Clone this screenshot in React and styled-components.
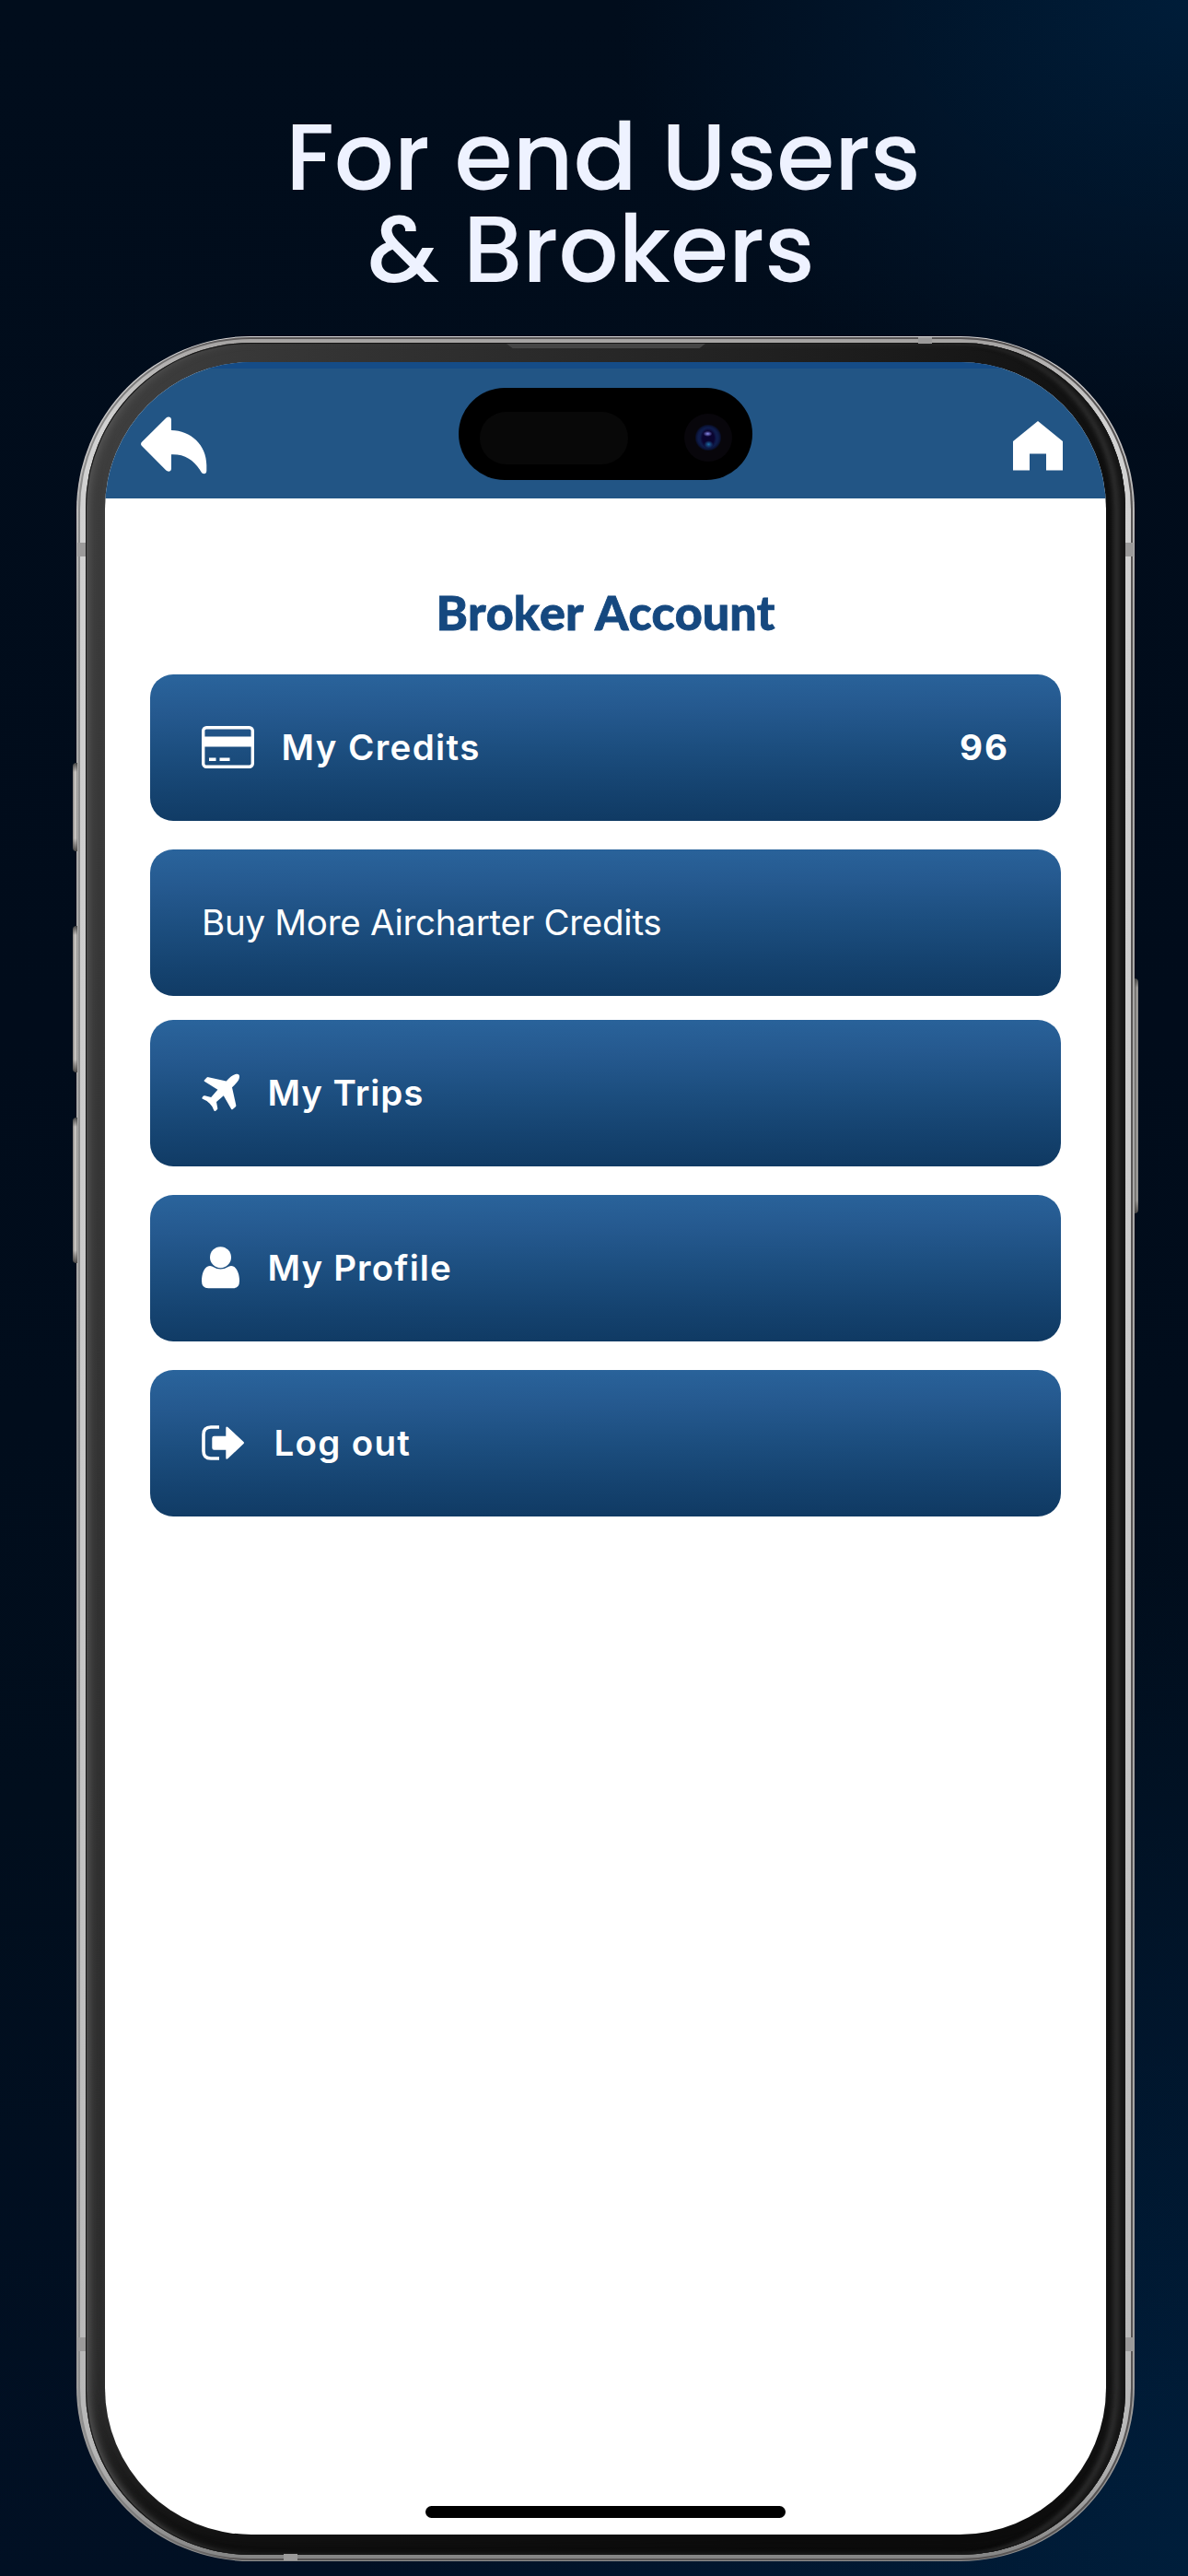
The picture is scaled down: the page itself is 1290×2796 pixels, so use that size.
import React from 'react'
import styled, { createGlobalStyle } from 'styled-components'


const GlobalStyle = createGlobalStyle
`
*{
    box-sizing:border-box;
}
body{
    margin:0;
    background:#010b1a;
}
`;

const Stage = styled.main
`
width:1290px;
height:2796px;
padding-top:121px;
overflow:hidden;
background:
    radial-gradient(ellipse 620px 460px at 100% 0%, #001d39 0%, rgba(0,29,57,0) 100%),
    radial-gradient(ellipse 900px 1100px at 100% 100%, #001e3b 0%, rgba(0,30,59,0) 100%),
    linear-gradient(180deg, #010d1c 0%, #010c1b 40%, #010e1d 70%, #011024 100%);
`;

const Headline = styled.h1
`
margin:0 0 44px;
padding-left:20px;
font-family:Poppins, Inter, sans-serif;
font-size:102px;
font-weight:500;
line-height:100px;
text-align:center;
white-space:pre;
color:#eef2ff;
`;

// the metal edge is four nested shells: rim, groove, band, bezel
const Phone = styled.div
`
position:relative;
width:1149px;
height:2415px;
margin-left:83px;
padding:1px 2px;
border-radius:189px;
background:linear-gradient(180deg, #d8d6d6 0%, #aaa9a8 12%, #a5a4a3 88%, #8f8f8f 100%);
`;

const Groove = styled.div
`
height:100%;
padding:2px;
border-radius:187px;
background:
    linear-gradient(90deg, #8f8f8f 0, rgba(80,76,76,0) 190px, rgba(80,76,76,0) 100%),
    #575454;
`;

const Band = styled.div
`
height:100%;
padding:4px 6px;
border-radius:185px;
background:
    linear-gradient(180deg, #a5a3a2 0, rgba(165,163,162,0) 90px, rgba(130,130,130,0) 2290px, #858585 100%),
    linear-gradient(180deg, #d2d2d2 0%, #c9c9c9 55%, #b5b5b5 100%);
`;

const Bezel = styled.div
`
height:100%;
padding:21px 21px 22px;
border-radius:179px;
background:linear-gradient(100deg, #404040 0%, #333 18%, #1c1c1c 55%, #0e0e0e 75%, #141414 100%);
box-shadow:
    inset 0 0 0 1px #161616,
    inset -9px 0 5px -2px #161616,
    inset -15px 0 5px -2px #303030,
    inset 8px 0 10px -3px #565656,
    inset 0 -50px 40px -20px #0b0b0b;
`;

const Screen = styled.div
`
position:relative;
display:flex;
flex-direction:column;
height:100%;
border-radius:159px;
overflow:hidden;
background:#fff;
`;

const TopBar = styled.header
`
display:flex;
justify-content:space-between;
align-items:flex-start;
height:148px;
padding:57px 47px 0 39px;
border-top:7px solid #154c87;
background:#225585;
svg{
    display:block;
    fill:#fff;
}
`;

const BackIcon = styled.svg
`
width:72px;
height:63px;
margin-top:-5px;
`;

const HomeIcon = styled.svg
`
width:54px;
height:54px;
`;

const Island = styled.div
`
position:absolute;
top:28px;
left:384px;
display:flex;
align-items:center;
justify-content:space-between;
width:319px;
height:100px;
padding:8px 22px 0 23px;
border-radius:50px;
background:#000;
`;

const Sensor = styled.span
`
width:161px;
height:57px;
border-radius:29px;
background:#080808;
`;

const Lens = styled.span
`
width:52px;
height:52px;
border-radius:50%;
background:
    radial-gradient(ellipse 5px 3px at 49% 42%, #8d8df0, transparent 100%),
    radial-gradient(ellipse 5px 4px at 51% 64%, #1d6fa8, transparent 100%),
    radial-gradient(ellipse 9px 11px at 50% 51%, #0a0430 70%, transparent 100%),
    radial-gradient(circle at 50% 50%, #15205a 0, #0e1c4a 11px, #0a1234 13px, #08060b 14.5px);
`;

const Content = styled.section
`
display:flex;
flex-direction:column;
padding:92px 49px 0;
`;

const Title = styled.h2
`
margin:0 0 36.5px;
font-family:Lato, sans-serif;
font-size:52px;
font-weight:900;
font-kerning:none;
line-height:62px;
text-align:center;
color:#15487f;
-webkit-text-stroke:0.8px #15487f;
`;

const Row = styled.a
`
display:flex;
align-items:center;
gap:29.5px;
height:159.5px;
margin-bottom:${props => props.$tight ? '25.5px' : '30.5px'};
padding:0 56px;
border-radius:25px;
background:linear-gradient(179.4deg, #2a649c 0%, #25598f 25%, #1c4e7f 50%, #154370 75%, #0f3962 100%);
color:#fff;
font-family:Inter, sans-serif;
font-size:38.5px;
svg{
    display:block;
    flex:none;
}
`;

const Label = styled.span
`
font-weight:${props => props.$light ? 400 : 600};
letter-spacing:${props => props.$spacing}px;
`;

const Amount = styled.span
`
margin-left:auto;
font-weight:700;
letter-spacing:2px;
`;

const HomeIndicator = styled.div
`
width:391px;
height:13px;
margin:auto auto 18px;
border-radius:7px;
background:#000;
`;

const SideButton = styled.span
`
position:absolute;
top:${props => props.$top}px;
${props => props.$right ? 'right:-4px;' : 'left:-4px;'}
width:${props => props.$right ? 4 : 5}px;
height:${props => props.$height}px;
border-radius:${props => props.$right ? '0 4px 4px 0' : '4px 0 0 4px'};
background:
    linear-gradient(180deg, #444 0, rgba(68,68,68,0) 10px, rgba(68,68,68,0) calc(100% - 14px), #4a4745 100%),
    ${props => props.$right
        ? 'linear-gradient(90deg, #5e5c5a 0, #a09e9c 60%, #8a8886 100%)'
        : 'linear-gradient(90deg, #84807d 0, #d5d2cf 60%, #8a8886 100%)'};
`;

const Antenna = styled.span
`
position:absolute;
top:${props => props.$top}px;
left:${props => props.$left}px;
width:${props => props.$flat ? 15 : 9}px;
height:${props => props.$flat ? 7 : 15}px;
background:#9b9a9a;
`;

const Speaker = styled.span
`
position:absolute;
top:8px;
left:467px;
width:216px;
height:5px;
background:#454545;
clip-path:polygon(0 0, 100% 0, 97% 100%, 3% 100%);
`;

const CardIcon = () => (
    <svg width="57" height="46" viewBox="0 0 57 46">
        <rect x="1.7" y="1.7" width="53.6" height="42.6" rx="3.5" fill="none" stroke="#fff" strokeWidth="3.4" />
        <path d="M2 11.5h53v11H2zM8 34.500h7.500v3.500H8zM19.500 34.500h11v3.500h-11z" fill="#fff" />
    </svg>
)

const PlaneIcon = () => (
    <svg width="42" height="42" viewBox="0 0 42 42">
        <path
            fill="#fff"
            d="M40.7 5.4C41.6 1.6 40.4.1 36.6 1C33.5 1.7 30.3 4.8 26.7 8.5L7.4 4.2Q6.4 3.9 5.6 4.6L2.8 7.4Q2.2 8.2 3 8.7L17.4 17.7L10.2 26L3.4 24.3Q2.3 24.1 1.6 24.8L.6 26.3Q.1 27.2 1 27.8Q5.8 29.6 8.7 32.8Q12.2 36.1 13.3 40.3Q13.9 41.5 14.9 40.9L16.8 39.2Q17.5 38.4 17.2 37.4L16 31.1L23.8 24.3L32.1 38.7Q32.8 39.7 33.7 39L36.9 36.2Q37.5 35.5 37.3 34.6L33 15.2C36.6 11.6 39.9 8.6 40.7 5.4Z"
        />
    </svg>
)

const UserIcon = () => (
    <svg width="42" height="46" viewBox="0 0 42 46">
        <circle cx="20.5" cy="11.7" r="11.5" fill="#fff" />
        <path
            fill="#fff"
            d="M7.5 21.3Q9.3 20.8 11.2 21.5Q20.5 27.5 29.8 21.5Q31.7 20.8 33.5 21.3C38.5 22.6 41 30 41 37.5Q41 45.3 33.8 45.3H7.2Q0 45.3 0 37.5C0 30 2.5 22.6 7.5 21.3Z"
        />
    </svg>
)

const LogoutIcon = () => (
    <svg width="49" height="38" viewBox="0 0 49 38">
        <path d="M19 2H10Q2 2 2 10V28Q2 36 10 36H19" fill="none" stroke="#fff" strokeWidth="3.6" />
        <path
            fill="#fff"
            d="M13.5 11.8H26.3V3Q26.3.4 28.6 2.2L45.5 18Q46.5 19 45.5 20L28.6 36Q26.3 37.8 26.3 35.2V26.7H13.5Q11.3 26.7 11.3 24.5V14Q11.3 11.8 13.5 11.8Z"
        />
    </svg>
)


function App() {
    return (
        <>
            <GlobalStyle />
            <Stage>
                <Headline>{'For end Users\n& Brokers\u00a0'}</Headline>
                <Phone>
                    <SideButton $top={463} $height={96} />
                    <SideButton $top={640} $height={159} />
                    <SideButton $top={848} $height={158} />
                    <SideButton $right $top={697} $height={255} />
                    <Groove>
                        <Band>
                            <Bezel>
                                <Screen>
                                    <TopBar>
                                        <BackIcon viewBox="0 0 72 63">
                                            <path d="M1 27.8L27.5 1.6C29.6-.6 33 .4 33 3.5V15C54 15.2 71.3 31 71.3 53V59C71.3 63 67 63.2 65.3 60C58 47.5 48 40.6 33 41.2V56.5C33 60 29.3 60.500 27.3 58.5L1 32Q-1 29.9 1 27.8Z" />
                                        </BackIcon>
                                        <HomeIcon viewBox="0 0 54 54">
                                            <path d="M27 0L54 22V53.5H36V35.5H18V53.5H0V22Z" />
                                        </HomeIcon>
                                    </TopBar>
                                    <Island>
                                        <Sensor />
                                        <Lens />
                                    </Island>
                                    <Content>
                                        <Title>Broker Account</Title>
                                        <Row>
                                            <CardIcon />
                                            <Label $spacing={1.4}>My Credits</Label>
                                            <Amount>96</Amount>
                                        </Row>
                                        <Row $tight>
                                            <Label $light $spacing={-0.27}>Buy More Aircharter Credits</Label>
                                        </Row>
                                        <Row>
                                            <PlaneIcon />
                                            <Label $spacing={0.95}>My Trips</Label>
                                        </Row>
                                        <Row>
                                            <UserIcon />
                                            <Label $spacing={1.15}>My Profile</Label>
                                        </Row>
                                        <Row>
                                            <LogoutIcon />
                                            <Label $spacing={1.3}>Log out</Label>
                                        </Row>
                                    </Content>
                                    <HomeIndicator />
                                </Screen>
                            </Bezel>
                        </Band>
                    </Groove>
                    <Speaker />
                    <Antenna $flat $top={1} $left={914} />
                    <Antenna $flat $top={2407} $left={225} />
                    <Antenna $top={224} $left={1} />
                    <Antenna $top={224} $left={1139} />
                    <Antenna $top={2172} $left={1} />
                    <Antenna $top={2172} $left={1139} />
                </Phone>
            </Stage>
        </>
    )
}

export default App
